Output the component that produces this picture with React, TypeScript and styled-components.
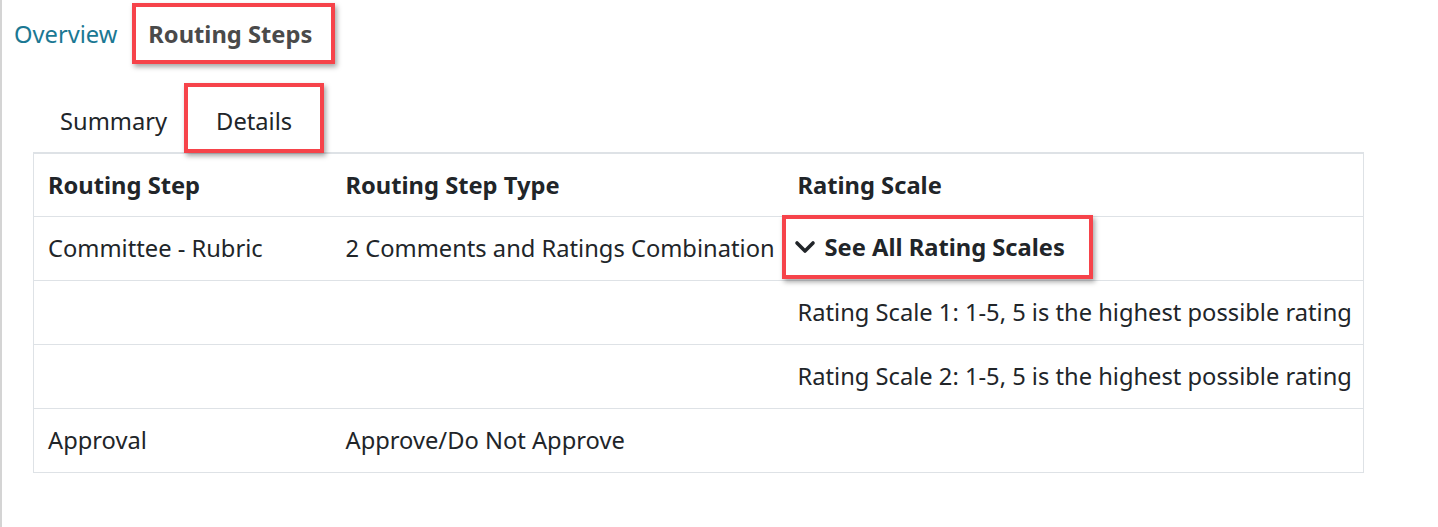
import styled, { createGlobalStyle } from "styled-components";

const GlobalStyle = createGlobalStyle`
    html, body {
        margin: 0;
        padding: 0;
        background: #ffffff;
        font-family: "Noto Sans", "Open Sans", sans-serif;
        color: #212529;
    }
`

const rows = [
    {step: 'Committee - Rubric', type: '2 Comments and Ratings Combination', scale: 'toggle'},
    {step: '', type: '', scale: 'Rating Scale 1: 1-5, 5 is the highest possible rating'},
    {step: '', type: '', scale: 'Rating Scale 2: 1-5, 5 is the highest possible rating'},
    {step: 'Approval', type: 'Approve/Do Not Approve', scale: ''},
]

const Chevron = () => (
    <svg width="22" height="14" viewBox="0 0 22 14" fill="none">
        <polyline points="3,3 11,11 19,3" stroke="#212529" strokeWidth="3.6" strokeLinecap="round" strokeLinejoin="round"/>
    </svg>
)

export default function App() {
    return (
        <>
            <GlobalStyle/>
            <Page>
                <TopNav>
                    <OverviewLink>Overview</OverviewLink>
                    <Highlight>
                        <ActiveTopTab>Routing Steps</ActiveTopTab>
                    </Highlight>
                </TopNav>
                <SubTabs>
                    <SubTab>Summary</SubTab>
                    <SubTab $marked>Details</SubTab>
                </SubTabs>
                <Table>
                    <colgroup>
                        <col style={{width: 298}}/>
                        <col style={{width: 452}}/>
                        <col/>
                    </colgroup>
                    <thead>
                    <tr>
                        <HeadCell>Routing Step</HeadCell>
                        <HeadCell>Routing Step Type</HeadCell>
                        <HeadCell>Rating Scale</HeadCell>
                    </tr>
                    </thead>
                    <tbody>
                    {rows.map((row, index) => (
                        <tr key={index}>
                            <Cell>{row.step}</Cell>
                            <Cell>{row.type}</Cell>
                            {row.scale === 'toggle' ? (
                                <Cell $flush>
                                    <ToggleButton>
                                        <Chevron/>
                                        See All Rating Scales
                                    </ToggleButton>
                                </Cell>
                            ) : (
                                <Cell>{row.scale}</Cell>
                            )}
                        </tr>
                    ))}
                    </tbody>
                </Table>
            </Page>
        </>
    );
}

const Page = styled.div`
    height: 527px;
    box-sizing: border-box;
    border-left: 2px solid #d4d4d4;
`
const TopNav = styled.nav`
    display: flex;
    align-items: center;
    gap: 15px;
    padding: 3px 0 0 12px;
    height: 61px;
`
const OverviewLink = styled.a`
    font-size: 23.7px;
    color: #1b7893;
    cursor: pointer;
`
const Highlight = styled.div`
    display: flex;
    align-items: center;
    box-sizing: border-box;
    height: 61px;
    border: 4px solid #f6434a;
    box-shadow: 2px 3px 5px rgba(0, 0, 0, 0.35);
    padding: 0 19px 0 12px;
`
const ActiveTopTab = styled.span`
    font-size: 23.7px;
    font-weight: 700;
    color: #4a4a4a;
`
const SubTabs = styled.div`
    display: flex;
    align-items: stretch;
    margin: 19px 0 -1px 37px;
    height: 70px;
`
const SubTab = styled.div<{ $marked?: boolean }>`
    display: flex;
    align-items: center;
    box-sizing: border-box;
    padding: ${p => p.$marked ? '6px 28px 0 28px' : '6px 17px 0 21px'};
    font-size: 23.7px;
    color: #212529;
    border: ${p => p.$marked ? '4px solid #f6434a' : 'none'};
    box-shadow: ${p => p.$marked ? '2px 3px 5px rgba(0, 0, 0, 0.35)' : 'none'};
    position: relative;
    z-index: 1;
`
const Table = styled.table`
    margin-left: 31px;
    width: 1331px;
    border-collapse: collapse;
    table-layout: fixed;
    border: 1px solid #dee2e6;
    border-top: 2px solid #dee2e6;
    font-size: 23.7px;
`
const HeadCell = styled.th`
    text-align: left;
    font-weight: 700;
    height: 63px;
    padding: 0 14px;
    box-sizing: border-box;
    white-space: nowrap;
`
const Cell = styled.td<{ $flush?: boolean }>`
    height: 63px;
    padding: ${p => p.$flush ? '0' : '0 14px'};
    border-top: 1px solid #dee2e6;
    white-space: nowrap;
    vertical-align: middle;
`
const ToggleButton = styled.button`
    display: inline-flex;
    align-items: center;
    gap: 9px;
    box-sizing: border-box;
    height: 64px;
    margin: -2px 0 0 -2px;
    padding: 0 24px 0 8px;
    border: 4px solid #f6434a;
    background: #ffffff;
    box-shadow: 2px 3px 5px rgba(0, 0, 0, 0.35);
    font-family: inherit;
    font-size: 23.7px;
    font-weight: 700;
    color: #212529;
    position: relative;
    z-index: 1;
`
